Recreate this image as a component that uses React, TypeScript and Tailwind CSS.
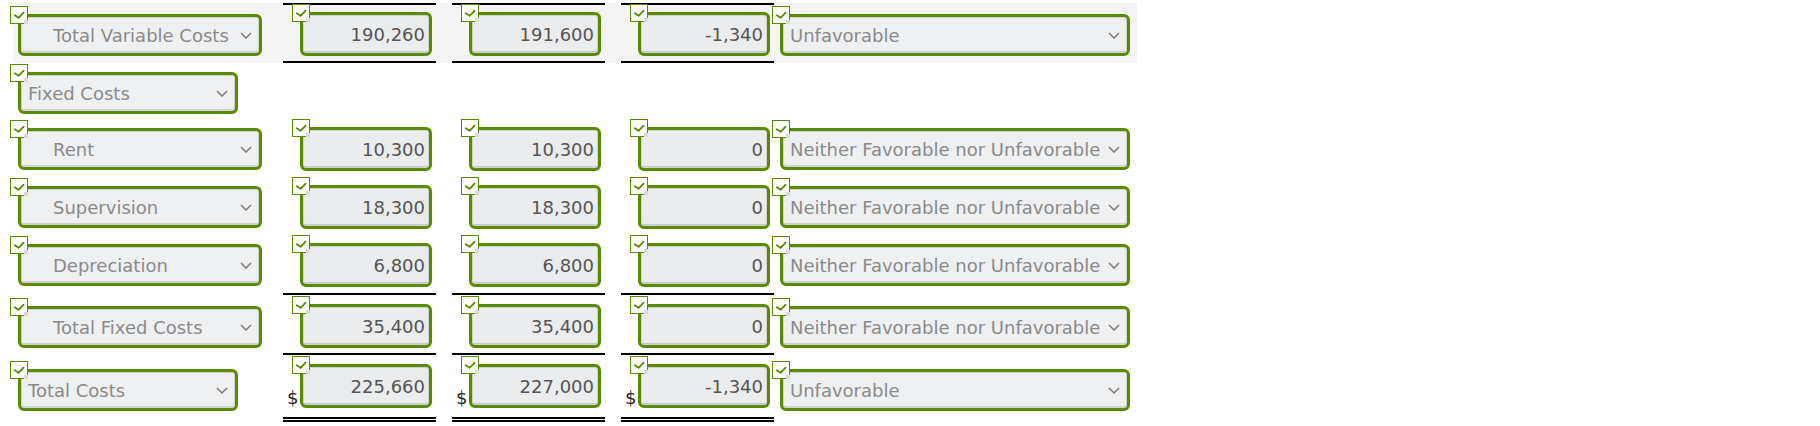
import React from "react";

function Check() {
  return (
    <div className="absolute -left-[11px] -top-[11px] z-10 h-[18px] w-[18px] border border-[#5a8a00] bg-white">
      <svg viewBox="0 0 16 16" className="block h-[16px] w-[16px]">
        <polyline points="3.8,8.2 7.6,10.8 12.6,5.6" fill="none" stroke="#5a8a00" strokeWidth="1.8" strokeLinecap="round" strokeLinejoin="round" />
      </svg>
      <div className="absolute -right-[1px] -bottom-[1px] h-[4px] w-[4px] bg-[#dadada]" />
    </div>
  );
}

function Chevron() {
  return (
    <svg viewBox="0 0 12 7" className="h-[7px] w-[12px] shrink-0">
      <polyline points="1,1 6,6 11,1" fill="none" stroke="#7a7a7a" strokeWidth="1.5" />
    </svg>
  );
}

function Select({ label, cls, textCls }: { label: string; cls: string; textCls: string }) {
  return (
    <div className={"relative h-[42px] rounded-[6px] border-[3px] border-[#5a8a00] bg-[#eff0f2] shadow-[inset_0_0_0_1px_#d2d2d2,inset_0_-2px_0_#cfcfcf] flex items-center justify-between pr-[7px] " + cls}>
      <Check />
      <span className={"text-[18px] text-[#8a8a8a] whitespace-nowrap " + textCls}>{label}</span>
      <Chevron />
    </div>
  );
}

function Num({ value, cls, dollar }: { value: string; cls: string; dollar?: boolean }) {
  return (
    <div className={"flex w-[153px] shrink-0 " + cls}>
      <div className="flex w-[17px] h-[44px] items-end pl-[4px]">
        {dollar ? <span className="text-[18px] leading-[18px] text-[#222] mb-[1px]">$</span> : null}
      </div>
      <div className="relative h-[44px] w-[132px] rounded-[6px] border-[3px] border-[#5a8a00] bg-[#ebecee] shadow-[inset_0_0_0_1px_#d2d2d2,inset_0_-2px_0_#c8c8c8] flex items-center justify-end pr-[4px]">
        <Check />
        <span className="text-[18px] text-[#555]">{value}</span>
      </div>
    </div>
  );
}

export default function App() {
  return (
    <div className="w-[1820px] h-[426px] bg-white pt-[3px] pl-[13px] font-['DejaVu_Sans',sans-serif] overflow-hidden">
      <div className="w-[1124px]">
        {/* Row 1 */}
        <div className="flex h-[60px] bg-[#f4f4f4]">
          <div className="w-[270px] shrink-0 pl-[5px] pt-[11px]">
            <Select label="Total Variable Costs" cls="w-[244px]" textCls="pl-[32px]" />
          </div>
          <Num value="190,260" cls="border-t-2 border-b-2 border-black pt-[7px]" />
          <Num value="191,600" cls="ml-[16px] border-t-2 border-b-2 border-black pt-[7px]" />
          <Num value="-1,340" cls="ml-[16px] border-t-2 border-b-2 border-black pt-[7px]" />
          <div className="pl-[6px] pt-[11px]">
            <Select label="Unfavorable" cls="w-[350px]" textCls="pl-[7px]" />
          </div>
        </div>
        {/* Row 2 */}
        <div className="flex h-[56px]">
          <div className="w-[270px] shrink-0 pl-[5px] pt-[9px]">
            <Select label="Fixed Costs" cls="w-[220px]" textCls="pl-[7px]" />
          </div>
        </div>
        {[
          ["Rent", "10,300", "10,300"],
          ["Supervision", "18,300", "18,300"],
          ["Depreciation", "6,800", "6,800"],
        ].map(([l, a, b]) => (
          <div key={l} className="flex h-[58px]">
            <div className="w-[270px] shrink-0 pl-[5px] pt-[9px]">
              <Select label={l} cls="w-[244px]" textCls="pl-[32px]" />
            </div>
            <Num value={a} cls="pt-[8px]" />
            <Num value={b} cls="ml-[16px] pt-[8px]" />
            <Num value="0" cls="ml-[16px] pt-[8px]" />
            <div className="pl-[6px] pt-[9px]">
              <Select label="Neither Favorable nor Unfavorable" cls="w-[350px]" textCls="pl-[7px]" />
            </div>
          </div>
        ))}
        {/* Row 6 */}
        <div className="flex h-[60px]">
          <div className="w-[270px] shrink-0 pl-[5px] pt-[13px]">
            <Select label="Total Fixed Costs" cls="w-[244px]" textCls="pl-[32px]" />
          </div>
          <Num value="35,400" cls="border-t-2 border-black pt-[9px]" />
          <Num value="35,400" cls="ml-[16px] border-t-2 border-black pt-[9px]" />
          <Num value="0" cls="ml-[16px] border-t-2 border-black pt-[9px]" />
          <div className="pl-[6px] pt-[13px]">
            <Select label="Neither Favorable nor Unfavorable" cls="w-[350px]" textCls="pl-[7px]" />
          </div>
        </div>
        {/* Row 7 */}
        <div className="flex h-[69px]">
          <div className="w-[270px] shrink-0 pl-[5px] pt-[16px]">
            <Select label="Total Costs" cls="w-[220px]" textCls="pl-[7px]" />
          </div>
          <Num value="225,660" dollar cls="border-t-2 border-b-[5px] border-double border-black pt-[9px]" />
          <Num value="227,000" dollar cls="ml-[16px] border-t-2 border-b-[5px] border-double border-black pt-[9px]" />
          <Num value="-1,340" dollar cls="ml-[16px] border-t-2 border-b-[5px] border-double border-black pt-[9px]" />
          <div className="pl-[6px] pt-[16px]">
            <Select label="Unfavorable" cls="w-[350px]" textCls="pl-[7px]" />
          </div>
        </div>
      </div>
    </div>
  );
}
